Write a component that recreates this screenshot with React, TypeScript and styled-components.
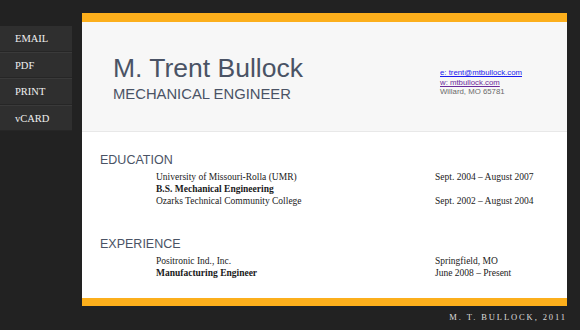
import React from "react";
import styled, { createGlobalStyle } from "styled-components";

const GlobalStyle = createGlobalStyle`
    html, body {
        margin: 0;
        padding: 0;
        background-color: #222222;
    }
`

const PageWrapper = styled.div`
    display: flex;
    align-items: flex-start;
    gap: 10px;
    width: 580px;
    height: 330px;
    padding-top: 13px;
    box-sizing: border-box;
    font-family: "Liberation Serif", serif;
`

const Sidebar = styled.nav`
    margin-top: 13px;
    width: 72px;
    background-color: #2f2f2f;
    display: flex;
    flex-direction: column;
`

const SidebarItem = styled.a`
    display: block;
    height: 24.5px;
    line-height: 25px;
    padding-left: 15px;
    font-size: 10.5px;
    color: #f0f0f0;
    text-decoration: none;
    border-top: 1px solid #3a3a3a;
    border-bottom: 1px solid #262626;

    &:first-child {
        border-top: none;
    }
`

const Column = styled.div`
    display: flex;
    flex-direction: column;
    width: 485px;
`

const Card = styled.div`
    border-top: 9px solid #fcaf1c;
    border-bottom: 8px solid #fcaf1c;
    background-color: white;
`

const Header = styled.header`
    height: 109px;
    background-color: #f7f7f7;
    border-bottom: 1px solid #e8e8e8;
    display: flex;
    justify-content: space-between;
    font-family: "Liberation Sans", Arial, sans-serif;
`

const NameBlock = styled.div`
    padding: 30px 0 0 31px;
    color: #4a5365;

    & > h1 {
        margin: 0;
        font-size: 26.5px;
        font-weight: normal;
        line-height: 32px;
    }

    & > h2 {
        margin: 1px 0 0;
        font-size: 14.8px;
        font-weight: normal;
        line-height: 18px;
    }
`

const Contact = styled.div`
    width: 127px;
    padding-top: 46px;
    font-size: 7.8px;
    line-height: 9.6px;
    color: #6a6a6a;

    & > a {
        display: block;
        color: #1a1aee;
    }

    & > a.visited {
        color: #6b2a9b;
    }
`

const Body = styled.div`
    height: 166px;
    padding: 20px 0 0 18px;
    box-sizing: border-box;
`

const Section = styled.section`
    margin-bottom: 29px;

    & > h3 {
        margin: 0 0 3px;
        font-family: "Liberation Sans", Arial, sans-serif;
        font-size: 12.5px;
        font-weight: normal;
        color: #4a5365;
        line-height: 16px;
    }
`

const Row = styled.div<{ $bold?: boolean }>`
    display: grid;
    grid-template-columns: 279px 1fr;
    padding-left: 56px;
    font-size: 9.5px;
    line-height: 12px;
    color: #1a1a1a;
    font-weight: ${props => props.$bold ? "bold" : "normal"};
`

const Footer = styled.footer`
    text-align: right;
    padding-top: 6px;
    font-size: 8.5px;
    letter-spacing: 1.9px;
    color: #dddddd;
`

export default function App() {
    return (
        <>
            <GlobalStyle />
            <PageWrapper>
                <Sidebar>
                    <SidebarItem href="#">EMAIL</SidebarItem>
                    <SidebarItem href="#">PDF</SidebarItem>
                    <SidebarItem href="#">PRINT</SidebarItem>
                    <SidebarItem href="#">vCARD</SidebarItem>
                </Sidebar>
                <Column>
                    <Card>
                        <Header>
                            <NameBlock>
                                <h1>M. Trent Bullock</h1>
                                <h2>MECHANICAL ENGINEER</h2>
                            </NameBlock>
                            <Contact>
                                <a href="#">e: trent@mtbullock.com</a>
                                <a href="#" className="visited">w: mtbullock.com</a>
                                <div>Willard, MO 65781</div>
                            </Contact>
                        </Header>
                        <Body>
                            <Section>
                                <h3>EDUCATION</h3>
                                <Row><span>University of Missouri-Rolla (UMR)</span><span>Sept. 2004 – August 2007</span></Row>
                                <Row $bold><span>B.S. Mechanical Engineering</span><span></span></Row>
                                <Row><span>Ozarks Technical Community College</span><span>Sept. 2002 – August 2004</span></Row>
                            </Section>
                            <Section>
                                <h3>EXPERIENCE</h3>
                                <Row><span>Positronic Ind., Inc.</span><span>Springfield, MO</span></Row>
                                <Row><b>Manufacturing Engineer</b><span>June 2008 – Present</span></Row>
                            </Section>
                        </Body>
                    </Card>
                    <Footer>M. T. BULLOCK, 2011</Footer>
                </Column>
            </PageWrapper>
        </>
    );
}
